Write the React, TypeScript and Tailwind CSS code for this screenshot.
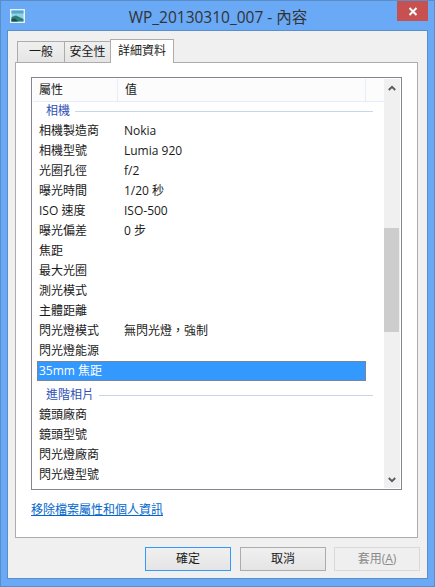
const FONT = "font-['Open_Sans','Noto_Sans_CJK_TC',sans-serif]";

type Row = { name: string; value?: string; selected?: boolean };

const cameraRows: Row[] = [
  { name: "相機製造商", value: "Nokia" },
  { name: "相機型號", value: "Lumia 920" },
  { name: "光圈孔徑", value: "f/2" },
  { name: "曝光時間", value: "1/20 秒" },
  { name: "ISO 速度", value: "ISO-500" },
  { name: "曝光偏差", value: "0 步" },
  { name: "焦距" },
  { name: "最大光圈" },
  { name: "測光模式" },
  { name: "主體距離" },
  { name: "閃光燈模式", value: "無閃光燈，強制" },
  { name: "閃光燈能源" },
  { name: "35mm 焦距", selected: true },
];

const advancedRows: Row[] = [
  { name: "鏡頭廠商" },
  { name: "鏡頭型號" },
  { name: "閃光燈廠商" },
  { name: "閃光燈型號" },
];

function PropRow({ row }: { row: Row }) {
  return (
    <div
      className={`flex h-5 items-center pl-[2px] ${
        row.selected ? "bg-[#3399ff] text-white outline-1 outline-dotted -outline-offset-1 outline-[#b5763a]" : "text-[#1a1a1a]"
      }`}
    >
      <span className="w-[85px] shrink-0 whitespace-nowrap">{row.name}</span>
      <span className="whitespace-nowrap">{row.value}</span>
    </div>
  );
}

function GroupTitle({ title, className }: { title: string; className: string }) {
  return (
    <div className={`flex items-center gap-[5px] pl-[9px] text-[#2f4fb5] ${className}`}>
      <span className="whitespace-nowrap">{title}</span>
      <span className="h-px flex-1 bg-[#c9d6ea]" />
    </div>
  );
}

function Arrow({ down }: { down?: boolean }) {
  return (
    <svg width="8" height="6" viewBox="0 0 8 6" className={down ? "rotate-180" : ""}>
      <path d="M0.8 5 L4 1.8 L7.2 5" fill="none" stroke="#5a5a5a" strokeWidth="1.9" />
    </svg>
  );
}

function DialogButton({ children, variant }: { children: React.ReactNode; variant?: "default" | "disabled" }) {
  const cls =
    variant === "default"
      ? "mr-px border-[#3399ff] bg-gradient-to-b from-[#f0f0f0] to-[#e5e5e5] text-[#1a1a1a]"
      : variant === "disabled"
        ? "border-[#d9d9d9] bg-[#efefef] text-[#8a8a8a]"
        : "border-[#acacac] bg-gradient-to-b from-[#f0f0f0] to-[#e5e5e5] text-[#1a1a1a]";
  return (
    <div className={`flex h-[24px] w-[86px] items-center justify-center border text-[12px] ${cls}`}>
      {children}
    </div>
  );
}

export default function App() {
  return (
    <div className={`flex h-[587px] w-[435px] flex-col overflow-hidden border border-[#5a8ec9] bg-[#69a9f5] text-[12px] ${FONT}`}>
      <div className="flex h-[29px] shrink-0 items-start">
        <svg width="15" height="14" viewBox="0 0 15 14" className="ml-[9px] mt-[8px] shrink-0">
          <rect x="0" y="0" width="15" height="14" fill="#e8f2f6" />
          <rect x="1.5" y="1.5" width="12" height="11" fill="#8fd0e8" />
          <rect x="1.5" y="1.5" width="12" height="3" fill="#4fa8d0" />
          <path d="M1.5 8 L6 6.5 L13.5 10 V12.5 H1.5 Z" fill="#2d7f78" />
          <path d="M1.5 10 L5 9.5 L8 12.5 H1.5 Z" fill="#174f50" />
        </svg>
        <div className="flex-1 pl-[44px] pr-[30px] pt-[6px] text-center text-[15.5px] leading-5 text-[#333333]">
          WP_20130310_007 - 內容
        </div>
        <div className="mr-[6px] flex h-5 w-[31px] shrink-0 items-center justify-center bg-[#c75050]">
          <svg width="10" height="9" viewBox="0 0 10 9">
            <path d="M1.5 1 L8.5 8 M8.5 1 L1.5 8" stroke="#ffffff" strokeWidth="2" />
          </svg>
        </div>
      </div>

      <div className="mx-[6px] flex h-[549px] shrink-0 flex-col border border-[#5a8ec9] bg-[#f0f0f0] pl-[7px] pr-[9px]">
        <div className="flex h-[31px] shrink-0 items-end pl-[2px]">
          <div className="flex h-[21px] w-[48px] items-center justify-center border border-b-0 border-[#acacac] bg-gradient-to-b from-[#f0f0f0] to-[#e5e5e5] text-[#1a1a1a]">
            一般
          </div>
          <div className="-ml-px flex h-[21px] w-[47px] items-center justify-center border border-b-0 border-[#acacac] bg-gradient-to-b from-[#f0f0f0] to-[#e5e5e5] text-[#1a1a1a]">
            安全性
          </div>
          <div className="relative z-10 -mb-px -ml-px flex h-[24px] w-[64px] items-center justify-center border border-b-0 border-[#acacac] bg-white pb-[2px] text-[#1a1a1a]">
            詳細資料
          </div>
        </div>

        <div className="flex h-[476px] shrink-0 flex-col border border-[#acacac] bg-white pl-[15px] pr-[15px] pt-[14px]">
          <div className="flex h-[413px] shrink-0 border border-[#82878f] p-px">
            <div className="flex min-w-0 flex-1 flex-col overflow-hidden">
              <div className="flex h-[23px] shrink-0 items-center border-b border-[#e5eef8] bg-[#fcfcfc] text-[#1a1a1a]">
                <div className="flex h-full w-[85px] items-center border-r border-[#e5eef8] pl-[6px]">屬性</div>
                <div className="flex h-full w-[248px] items-center border-r border-[#e5eef8] pl-[7px]">值</div>
              </div>
              <div className="box-content w-[329px] pl-[4px]">
                <GroupTitle title="相機" className="-mr-[7px] mt-[-1px] h-5" />
                <div>
                  {cameraRows.map((row) => (
                    <PropRow key={row.name} row={row} />
                  ))}
                </div>
                <GroupTitle title="進階相片" className="-mr-[7px] mt-[4px] h-5" />
                <div>
                  {advancedRows.map((row) => (
                    <PropRow key={row.name} row={row} />
                  ))}
                </div>
              </div>
            </div>
            <div className="flex w-[16px] shrink-0 flex-col bg-[#f0f0f0]">
              <div className="flex h-[17px] shrink-0 items-center justify-center">
                <Arrow />
              </div>
              <div className="mt-[132px] h-[104px] w-[15px] shrink-0 bg-[#cdcdcd]" />
              <div className="flex-1" />
              <div className="flex h-[17px] shrink-0 items-center justify-center">
                <Arrow down />
              </div>
            </div>
          </div>
          <div className="mt-[12px] text-[12px] leading-4 text-[#0066cc] underline">移除檔案屬性和個人資訊</div>
        </div>

        <div className="-mr-[2px] mt-[9px] flex justify-end gap-[8px]">
          <DialogButton variant="default">確定</DialogButton>
          <DialogButton>取消</DialogButton>
          <DialogButton variant="disabled">
            套用(<span className="underline">A</span>)
          </DialogButton>
        </div>
      </div>
    </div>
  );
}
